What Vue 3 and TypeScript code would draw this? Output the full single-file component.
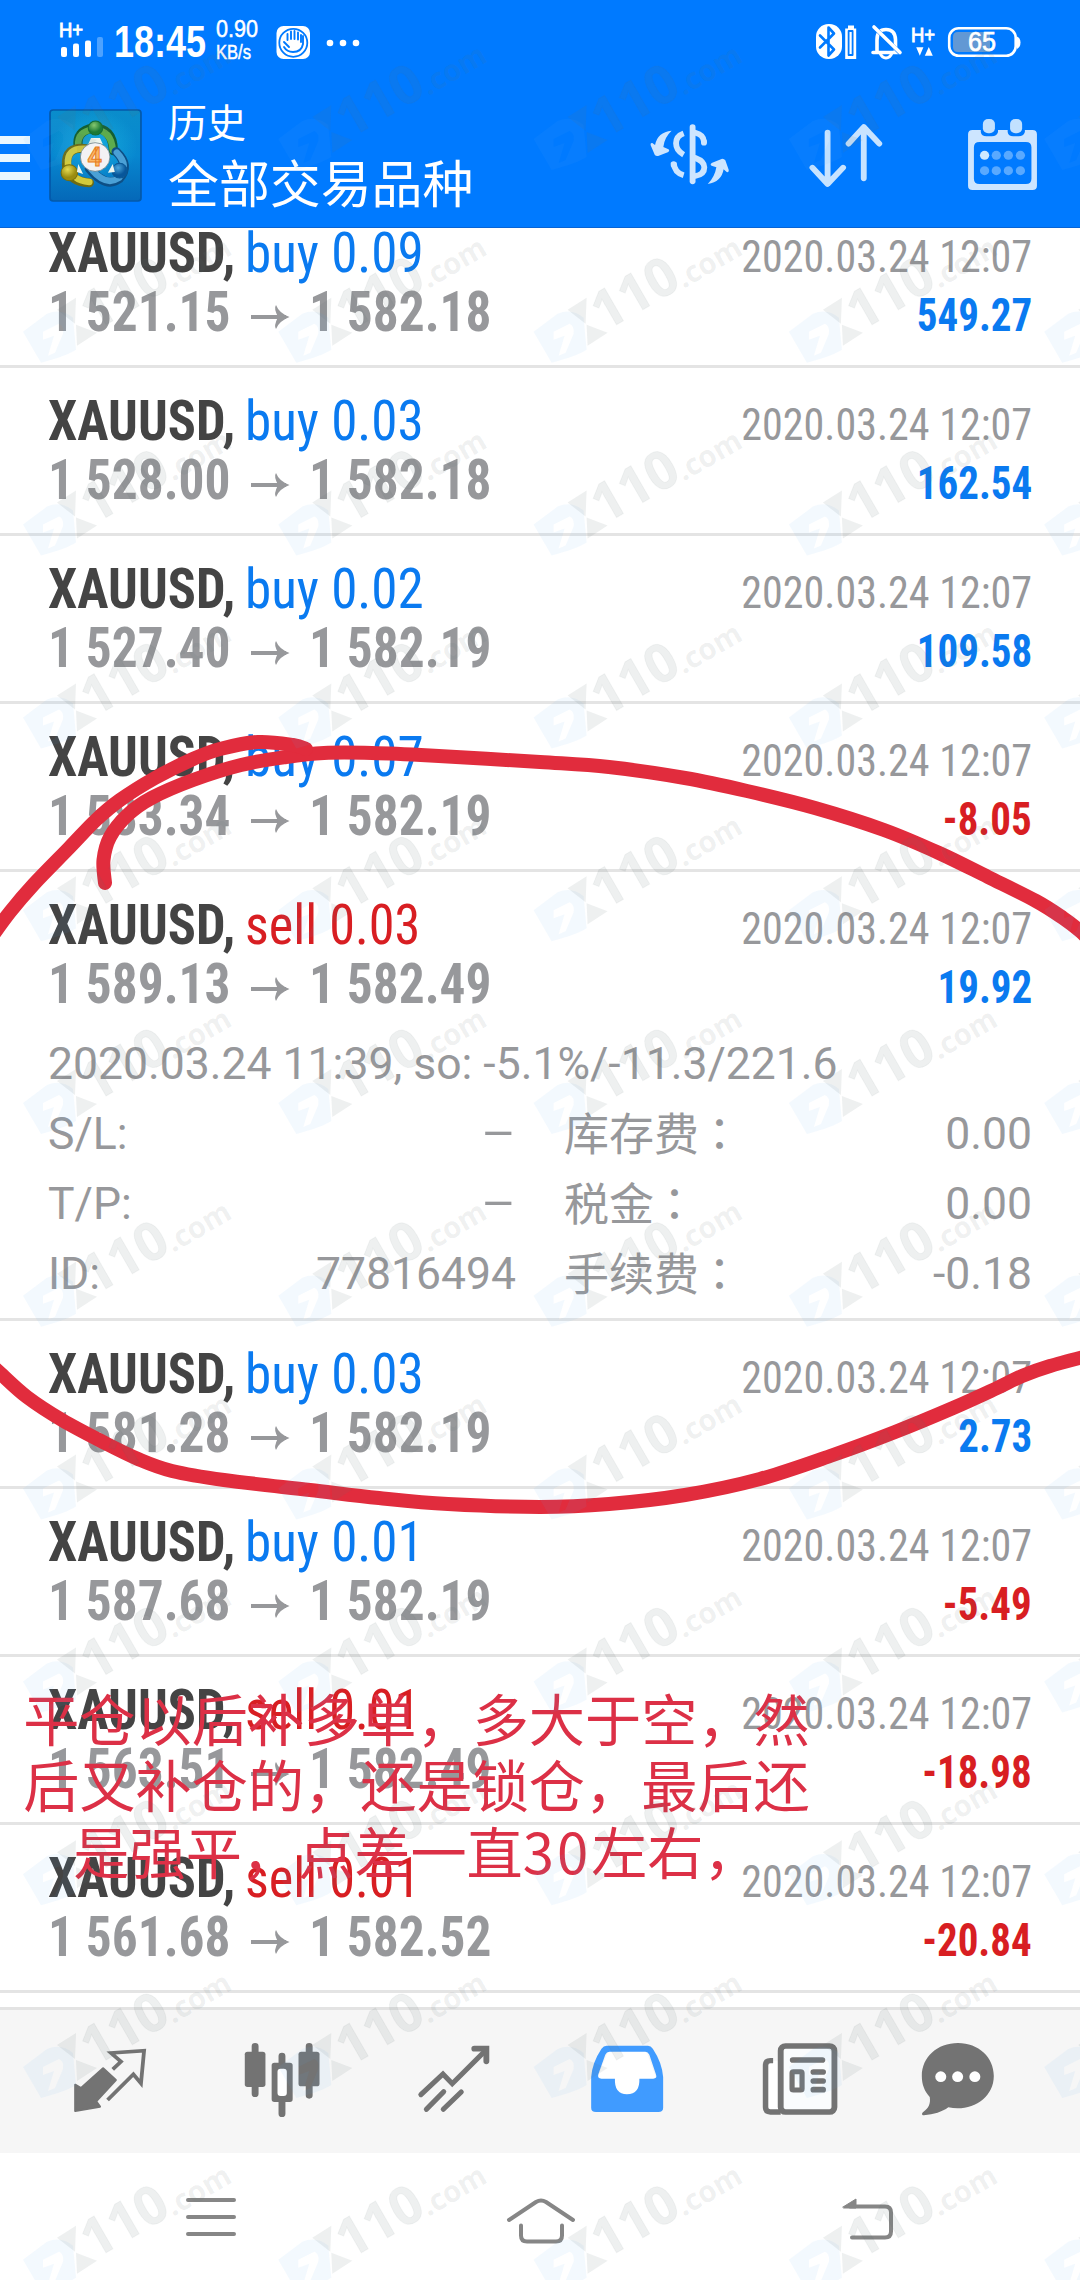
<script setup lang="ts">
interface Deal {
  side: 'buy' | 'sell'
  lots: string
  open: string
  close: string
  profit: string
  expanded?: boolean
}

type Point = [number, number]

const deals: Deal[] = [
  { side: 'buy', lots: '0.09', open: '1 521.15', close: '1 582.18', profit: '549.27' },
  { side: 'buy', lots: '0.03', open: '1 528.00', close: '1 582.18', profit: '162.54' },
  { side: 'buy', lots: '0.02', open: '1 527.40', close: '1 582.19', profit: '109.58' },
  { side: 'buy', lots: '0.07', open: '1 583.34', close: '1 582.19', profit: '-8.05' },
  { side: 'sell', lots: '0.03', open: '1 589.13', close: '1 582.49', profit: '19.92', expanded: true },
  { side: 'buy', lots: '0.03', open: '1 581.28', close: '1 582.19', profit: '2.73' },
  { side: 'buy', lots: '0.01', open: '1 587.68', close: '1 582.19', profit: '-5.49' },
  { side: 'sell', lots: '0.01', open: '1 563.51', close: '1 582.49', profit: '-18.98' },
  { side: 'sell', lots: '0.01', open: '1 561.68', close: '1 582.52', profit: '-20.84' },
]

const details = [
  { key: 'S/L', value: '–', label: '库存费', amount: '0.00' },
  { key: 'T/P', value: '–', label: '税金', amount: '0.00' },
  { key: 'ID', value: '77816494', label: '手续费', amount: '-0.18' },
]

const noteLines = ['平仓以后补多单，多大于空，然', '后又补仓的，还是锁仓，最后还']

// Smooth curve through all the points of a hand-drawn stroke
function smooth(p: Point[]): string {
  let d = `M${p[0][0]} ${p[0][1]}`
  for (let i = 0; i < p.length - 1; i++) {
    const a = p[Math.max(i - 1, 0)]
    const b = p[i]
    const c = p[i + 1]
    const e = p[Math.min(i + 2, p.length - 1)]
    d += `C${b[0] + (c[0] - a[0]) / 6} ${b[1] + (c[1] - a[1]) / 6} ${c[0] - (e[0] - b[0]) / 6} ${c[1] - (e[1] - b[1]) / 6} ${c[0]} ${c[1]}`
  }
  return d
}

const strokes = [
  smooth([[105, 883], [103.5, 860], [110, 837], [127.5, 815], [151.5, 798], [193, 780], [241, 765], [286, 757], [324, 753], [372, 753], [430, 755.5], [540, 762], [609, 767], [685, 778], [747, 791], [815, 808], [884, 830], [939, 853], [988, 877], [1036, 901], [1063, 918], [1080, 931], [1095, 945]]),
  smooth([[306, 749], [293, 745], [258, 742], [220, 749], [193, 759], [155, 778], [120, 800], [96, 820], [69, 848], [34, 884], [10, 912], [-12, 942]]),
  smooth([[-12, 1362], [0, 1373], [27, 1397], [62, 1420], [103, 1442], [138, 1459], [172, 1471], [224, 1480], [310, 1490], [379, 1498], [448, 1504], [540, 1507], [609, 1504], [685, 1495], [760, 1479], [833, 1455], [895, 1432], [953, 1408], [995, 1389], [1022, 1376], [1050, 1366], [1095, 1354]]),
]

const marks: Point[] = []
for (let r = 0; r < 12; r++) {
  for (let c = 0; c < 5; c++) marks.push([23 + c * 255.3, 45 + r * 192.8])
}
</script>

<template>
  <div class="screen">
    <header class="top">
      <div class="status">
        <svg class="status-art" viewBox="0 0 1080 84">
          <g fill="#fff">
            <rect x="61" y="47" width="6" height="10" rx="2" />
            <rect x="73" y="43.5" width="6" height="13.500" rx="2" />
            <rect x="85" y="40.500" width="6" height="16.500" rx="2" />
            <rect x="97" y="37" width="6" height="20" rx="2" opacity=".3" />
            <rect x="276.500" y="26" width="33.500" height="33" rx="7" />
            <circle cx="330" cy="43" r="3.300" /><circle cx="343" cy="43" r="3.300" /><circle cx="356" cy="43" r="3.300" />
            <rect x="816" y="24" width="26" height="35" rx="12.500" />
            <path d="M848 25.500h6v3h2.200v30.500h-11v-30.500h2.800z" />
            <path d="M916.200 47.200h7.200l-3.600 8.600zM924.800 55.800h8l-4-8.800z" />
            <path d="M1017 36.500q3.500 1.500 3.500 6t-3.500 6.500z" />
          </g>
          <g fill="none" stroke="#007aff" stroke-linecap="round" stroke-linejoin="round">
            <circle cx="293.300" cy="42.800" r="14" stroke-width="1.800" />
            <path d="M284 42l5 5M287.500 40v-6M291 39v-7.500M294.500 39v-8M298 39.500v-7M301 42v-7M303 36v8q-1.500 8-10 8-6 0-9-5" stroke-width="1.900" />
            <path d="M820 35.500l14 14-5.500 6v-28l5.500 6-14 14" stroke-width="2.600" />
            <path d="M848.600 31v24h4v-24z" stroke-width="1.800" fill="#fff" />
          </g>
          <g fill="none" stroke="#fff" stroke-linecap="round" stroke-linejoin="round">
            <path d="M877 52v-12q0-10.500 9-10.500t9.500 10v12.500M873 52.500h26" stroke-width="3.600" />
            <path d="M880 53q2 5 6 5t6-5" stroke-width="3" />
            <path d="M876 29l25 25" stroke="#007aff" stroke-width="4" />
            <path d="M874 27l26 25.500" stroke-width="3.600" />
            <rect x="949.200" y="28.200" width="66.500" height="27.600" rx="9.500" stroke-width="2.600" />
          </g>
          <path d="M958 32h32v20h-32q-5 0-5-5v-10q0-5 5-5z" fill="#6298d4" />
          <g fill="#fff" font-family="Liberation Sans, sans-serif">
            <text x="59" y="36.700" font-size="19.500" stroke="#fff" stroke-width=".9" textLength="24" lengthAdjust="spacingAndGlyphs">H+</text>
            <text x="114" y="57.200" font-size="44" font-weight="700" textLength="92" lengthAdjust="spacingAndGlyphs">18:45</text>
            <text x="216" y="36.800" font-size="23" stroke="#fff" stroke-width=".5" textLength="42" lengthAdjust="spacingAndGlyphs">0.90</text>
            <text x="216" y="59" font-size="20" stroke="#fff" stroke-width=".5" textLength="35" lengthAdjust="spacingAndGlyphs">KB/s</text>
            <text x="911" y="42" font-size="20.500" stroke="#fff" stroke-width=".9" textLength="24" lengthAdjust="spacingAndGlyphs">H+</text>
            <text x="968" y="51" font-size="27" stroke="#fff" stroke-width=".7" textLength="28" lengthAdjust="spacingAndGlyphs">65</text>
          </g>
        </svg>
      </div>
      <div class="toolbar">
        <div class="burger"><i /><i /><i /></div>
        <svg class="logo" viewBox="143 327 270 279" preserveAspectRatio="none">
          <defs>
            <linearGradient id="bg" x1="0" y1="0" x2="0" y2="1"><stop offset="0" stop-color="#0a8dcb" /><stop offset=".5" stop-color="#0787d0" /><stop offset="1" stop-color="#0568b8" /></linearGradient>
            <radialGradient id="glow"><stop offset="0" stop-color="#19b4e0" /><stop offset="1" stop-color="#19b4e0" stop-opacity="0" /></radialGradient>
            <radialGradient id="gr" cx=".4" cy=".3"><stop offset="0" stop-color="#86c870" /><stop offset="1" stop-color="#1c7a35" /></radialGradient>
            <radialGradient id="ye" cx=".4" cy=".3"><stop offset="0" stop-color="#e6dc51" /><stop offset="1" stop-color="#9a8c10" /></radialGradient>
            <radialGradient id="bl" cx=".4" cy=".3"><stop offset="0" stop-color="#4ba6dc" /><stop offset="1" stop-color="#07569a" /></radialGradient>
          </defs>
          <rect x="146" y="330" width="264" height="273" rx="9" fill="url(#bg)" stroke="#0459aa" stroke-width="5" />
          <ellipse cx="275" cy="440" rx="125" ry="110" fill="url(#glow)" opacity=".8" />
          <g fill="none" stroke-linecap="round">
            <path d="M228 442q-8-50 44-58 56 0 58 68" stroke="#145f31" stroke-width="27" />
            <path d="M228 438q-4-44 44-50 52 2 56 62" stroke="#5dab4d" stroke-width="19" />
            <path d="M250 446q-60-8-56 52 10 48 66 50" stroke="#6e6b12" stroke-width="27" />
            <path d="M248 446q-54-4-50 48 10 48 62 52" stroke="#d3ca3c" stroke-width="19" />
            <path d="M338 455q42 42 8 82-38 28-86-32" stroke="#0d4f86" stroke-width="27" />
            <path d="M340 458q36 38 6 76-38 26-80-26" stroke="#4aa0d6" stroke-width="19" />
          </g>
          <circle cx="278" cy="384" r="21" fill="url(#gr)" stroke="#176c34" stroke-width="3" />
          <circle cx="202" cy="518" r="24" fill="url(#ye)" stroke="#776e0c" stroke-width="3" />
          <circle cx="348" cy="512" r="22" fill="url(#bl)" stroke="#0a5795" stroke-width="3" />
          <path d="M265 414h26l8 18h-42zM228 492l14 30-18-6zM328 492l-14 26 20-2z" fill="#edf5ef" />
          <circle cx="277" cy="471" r="43" fill="#f3f2f4" stroke="#5b7078" stroke-width="2" />
          <text x="276" y="497" text-anchor="middle" font-family="Roboto, sans-serif" font-weight="700" font-size="78" textLength="42" lengthAdjust="spacingAndGlyphs" fill="#fbb868" stroke="#e87d22" stroke-width="3">4</text>
        </svg>
        <div class="titles">
          <div class="small">历史</div>
          <div class="big">全部交易品种</div>
        </div>
        <svg class="tool dollar" viewBox="300 357 270 216" preserveAspectRatio="none">
          <g fill="none" stroke="#cde5ff" stroke-width="17">
            <path d="M418 400q-22 8-22 30 0 22 22 34M389 488q2 30 29 38" />
            <path d="M389 495v-3M477 428v-3" stroke-linecap="round" />
            <path d="M452 398q24 6 25 27M452 474q26 10 26 28 0 22-26 26" stroke-linecap="round" />
            <path d="M444 381v163" stroke-linecap="round" />
          </g>
          <g fill="#cde5ff">
            <path d="M383 392Q342 396 335 435L327 429Q321 428 322 435L334 464Q337 469 344 468L372 457Q379 452 374 448L359 441Q362 412 383 392Z" />
            <path d="M488 552Q528 546 534 508L543 516Q550 518 549 510L539 481Q536 476 530 476L501 488Q493 493 499 497L513 502Q508 532 488 552Z" />
          </g>
        </svg>
        <svg class="tool sort" viewBox="753 357 270 216" preserveAspectRatio="none" fill="none" stroke="#c7e3ff" stroke-width="17" stroke-linecap="round" stroke-linejoin="round">
          <path d="M836 398v152M792 503l44 49 45-49M941 535V382M897 431l44-50 45 50" />
        </svg>
        <svg class="tool calendar" viewBox="1208 357 270 216" preserveAspectRatio="none">
          <path fill-rule="evenodd" d="M1256 390h24v6q2 13 16 13h16q14 0 18-13v-6h28v6q2 13 16 13h16q14 0 18-13v-6h22q13 0 13 13v154q0 13-13 13h-174q-13 0-13-13v-154q0-13 13-13zM1276 426q-16 0-16 16v94q0 16 16 16h135q16 0 16-16v-94q0-16-16-16z" fill="#cde5ff" />
          <rect x="1286" y="357" width="35" height="43" rx="15" fill="#c2e1ff" /><rect x="1365" y="357" width="35" height="43" rx="15" fill="#c2e1ff" />
          <g fill="#59a9ff"><circle cx="1291" cy="466" r="13.500" fill="#cde9ff" /><circle cx="1325" cy="466" r="13.500" /><circle cx="1360" cy="466" r="13.500" /><circle cx="1395" cy="466" r="13.500" /><circle cx="1291" cy="512" r="13.500" /><circle cx="1325" cy="512" r="13.500" /><circle cx="1360" cy="512" r="13.500" /><circle cx="1395" cy="512" r="13.500" /></g>
        </svg>
      </div>
    </header>

    <main class="list">
      <section v-for="(d, i) in deals" :key="i" class="deal" :class="{ first: i === 0 }">
        <div class="line">
          <div class="name"><b class="cond">XAUUSD,</b><span class="cond" :class="d.side">{{ d.side }} {{ d.lots }}</span></div>
          <div class="cond date">2020.03.24 12:07</div>
        </div>
        <div class="line second">
          <div class="prices">
            <span class="cond price">{{ d.open }}</span>
            <svg class="arrow" viewBox="0 0 39 26"><path d="M2 13h31" stroke="#97989b" stroke-width="4" stroke-linecap="square" /><path d="M25 1Q28 9 38.500 13 28 17 25 25 22.500 22 27 13 22.500 4 25 1z" fill="#97989b" /></svg>
            <span class="cond price">{{ d.close }}</span>
          </div>
          <div class="cond profit" :class="d.profit.startsWith('-') ? 'sell' : 'buy'">{{ d.profit }}</div>
        </div>
        <div v-if="d.expanded" class="details">
          <div class="comment">2020.03.24 11:39, so: -5.1%/-11.3/221.6</div>
          <div v-for="x in details" :key="x.key" class="detail">
            <span class="key">{{ x.key }}:</span><span class="value" :class="{ dash: x.value === '–' }">{{ x.value }}</span>
            <span class="label">{{ x.label }}<em>：</em></span><span class="amount">{{ x.amount }}</span>
          </div>
        </div>
      </section>
    </main>

    <nav class="tabs">
      <div class="tab t1"><svg viewBox="203.900 150 232.300 240" preserveAspectRatio="none">
        <path d="M219 284L236 294L300 235L337 270L280 334L291 350L219 363Z" fill="#737373" stroke="#737373" stroke-width="6" stroke-linejoin="round" />
        <path d="M328 238L352 215L323 189L419 182L410 280L388 253L313 330" fill="none" stroke="#737373" stroke-width="11" />
      </svg></div>
      <div class="tab t2"><svg viewBox="700.900 150 232.300 240" preserveAspectRatio="none">
        <g stroke="#737373" stroke-width="20" stroke-linecap="round"><path d="M739 169v142M896 169v147M817 198v22M817 330v41" /></g>
        <rect x="709" y="185" width="60" height="106" rx="8" fill="#737373" /><rect x="865" y="185" width="61" height="104" rx="8" fill="#737373" />
        <rect x="800" y="230" width="34" height="94" fill="#fff" />
        <path fill-rule="evenodd" d="M795 218h45q8 0 8 8v102q0 8-8 8h-45q-8 0-8-8v-102q0-8 8-8zM813 236q-9 0-9 9v64q0 9 9 9h9q9 0 9-9v-64q0-9-9-9z" fill="#737373" />
      </svg></div>
      <div class="tab t3"><svg viewBox="1200.900 150 232.300 240" preserveAspectRatio="none" fill="none" stroke="#737373" stroke-width="15" stroke-linecap="round">
        <path d="M1221 314L1285 252L1312 281L1410 180" /><path d="M1376 176H1411V214" stroke-width="17" /><path d="M1237 358L1287 305M1286 358L1338 306" />
      </svg></div>
      <div class="tab t4"><svg viewBox="134.900 150 232.300 240" preserveAspectRatio="none">
        <path d="M198 180h108l32 90h-50l-8 44h-60l-8-44h-50z" fill="#fff" />
        <path fill-rule="evenodd" fill="#409bff" d="M192 167h120q8 0 14 9 27 42 30 85v92q0 13-14 13h-181q-14 0-14-13v-92q3-43 30-85 6-9 15-9zM200 185q-8 0-12 9l-20 58q-4 14 9 14h39q-2 46 35 47 38-1 36-47h40q13 0 8-13l-19-59q-4-9-12-9z" />
      </svg></div>
      <div class="tab t5"><svg viewBox="638.900 150 232.300 240" preserveAspectRatio="none" fill="none" stroke="#737373" stroke-width="17">
        <rect x="655" y="212" width="44" height="154" fill="#fff" stroke="none" />
        <rect x="699" y="168" width="156" height="198" rx="14" fill="#fafcfd" /><path d="M677 212h-8q-14 0-14 14v126q0 14 14 14h30" stroke-width="16" /><path d="M734 210h86M794 246h28M794 273h28M794 299h28" stroke-linecap="round" />
        <rect x="732" y="245" width="29" height="55" rx="4" stroke-width="15" />
      </svg></div>
      <div class="tab t6"><svg viewBox="1097.900 150 232.300 240" preserveAspectRatio="none">
        <path fill="#737373" d="M1214 159c60 0 104 43 104 99 0 67-66 109-132 94-18 14-42 21-71 24-7-1-7-6-1-11 15-11 21-24 18-44-15-17-23-37-23-63 0-57 45-99 105-99z" /><g fill="#fff"><circle cx="1164" cy="260" r="16" /><circle cx="1213" cy="260" r="16" /><circle cx="1263" cy="260" r="16" /></g>
      </svg></div>
    </nav>

    <footer class="system">
      <svg width="50" height="40" viewBox="0 0 50 40"><path d="M2 3h46M2 20h46M2 37h46" /></svg>
      <svg class="home" width="72" height="48" viewBox="0 0 72 48"><path d="M4 23L31 5q5-3 10 0L68 23M16 28.500v10q0 6 6 6h29q6 0 6-6v-10" /></svg>
      <svg width="52" height="44" viewBox="0 0 52 44"><path d="M8 9.500h35q6 0 6 6v19q0 6-6 6H10" /><path d="M1 10L14 2v9H2z" fill="#868686" stroke-width="1" /></svg>
    </footer>

    <div class="note">
      <div v-for="n in noteLines" :key="n">{{ n }}</div>
      <div>是强平，点差一直<i>30</i>左右，</div>
    </div>

    <svg class="overlay" viewBox="0 0 1080 2280">
      <path v-for="s in strokes" :key="s" :d="s" fill="none" stroke="#e12c3d" stroke-width="14" stroke-linecap="round" />
      <g v-for="(m, i) in marks" :key="i" :transform="`translate(${m[0]} ${m[1]})`" font-family="Open Sans, sans-serif">
        <path fill-rule="evenodd" d="M0 94L24 76Q38 70 50 80L53 112Q44 118 18 125zM20 94L36 86Q41 88 40 96L32 115 25 118 31 98 20 102z" fill="#5ab4eb" fill-opacity=".075" />
        <g fill="#5f7373" fill-opacity=".105">
          <path d="M34 72L53 60 52 86zM53 87L74 95 54 108z" />
          <template v-if="m[0] < 1000">
            <text transform="translate(71 94) rotate(-30)" font-size="53" font-weight="700" stroke="#5f7373" stroke-opacity=".06" stroke-width="1">110</text>
            <text transform="translate(150 51) rotate(-30)" font-size="29.500" font-weight="700" textLength="70" lengthAdjust="spacingAndGlyphs">.com</text>
          </template>
        </g>
      </g>
    </svg>
  </div>
</template>

<style>
body { margin: 0; }
</style>

<style scoped>
.screen { position: relative; display: flex; flex-direction: column; width: 1080px; height: 2280px; overflow: hidden; background: #fff; font-family: Roboto, "Noto Sans CJK SC", sans-serif; }
.top { height: 227px; flex: none; background: #007aff; border-bottom: 1px solid #0864d5; }
.status { height: 84px; }
.status-art { display: block; width: 1080px; height: 84px; }
.toolbar { display: flex; height: 143px; align-items: flex-start; color: #fff; }
.burger { display: flex; flex-direction: column; gap: 10px; width: 30px; padding-top: 52px; }
.burger i { height: 8px; background: #e9f7ff; }
.logo { width: 93px; height: 93px; margin: 25px 0 0 19px; }
.titles { width: 426px; margin: 9px 0 0 26px; font-family: "Noto Sans CJK SC", sans-serif; }
.small { font-size: 39px; line-height: 54px; }
.big { margin-top: 2px; font-size: 50.900px; line-height: 64px; white-space: nowrap; }
.tool { width: 93px; height: 72px; margin-top: 35px; flex: none; }
.dollar { margin-left: 49px; }
.sort { margin-left: 63px; }
.calendar { margin-left: 64px; }
.list { height: 1779px; flex: none; overflow: hidden; }
.deal { padding: 24px 48px 23px; border-bottom: 3px solid #e4e4e4; }
.deal.first { padding-top: 0; margin-top: -4px; }
.line { display: flex; justify-content: space-between; align-items: baseline; height: 59px; line-height: 59px; white-space: nowrap; }
.cond { display: inline-block; font-family: "Roboto Condensed", Roboto, sans-serif; font-stretch: 75%; transform: scaleX(.934); transform-origin: 0 50%; }
.name { display: flex; font-size: 56px; color: #444; }
.name b { width: 197px; font-weight: 700; }
.name .buy { color: #0a7af0; transform: scaleX(.948); }
.name .sell { color: #d81e22; transform: scaleX(.932); }
.date { font-size: 45px; color: #97989b; transform: scaleX(.935); transform-origin: 100% 50%; }
.prices { display: flex; align-items: baseline; }
.price { width: 181px; font-size: 55px; font-weight: 700; color: #97989b; }
.arrow { width: 39px; height: 26px; margin: 0 19px 0 22px; transform: translateY(-1px); }
.profit { font-size: 45.500px; font-weight: 700; transform: scaleX(.9); transform-origin: 100% 50%; }
.profit.buy { color: #0a7af0; }
.profit.sell { color: #d81e22; }
.details { padding-top: 15px; margin-bottom: -14px; color: #97989b; font-size: 44.500px; line-height: 70px; }
.comment, .detail { height: 70px; white-space: nowrap; }
.detail { display: flex; }
.key { width: 100px; }
.value { width: 368px; text-align: right; }
.dash { transform: scaleX(1.2); transform-origin: 100% 50%; }
.label { margin: -2px 0 0 48px; font-size: 45px; font-family: "Noto Sans CJK SC", sans-serif; }
.label em { font-style: normal; font-family: "Noto Sans CJK TC", sans-serif; margin-left: -2px; }
.amount { margin-left: auto; }
.tabs { display: flex; height: 143px; flex: none; border-top: 3px solid #e3e3e3; background: #f6f6f6; padding-left: 24px; }
.tab { display: flex; justify-content: center; padding-top: 30px; }
.tab svg { width: 80px; height: 80px; }
.t1 { width: 172px; } .t2 { width: 171px; } .t3, .t4 { width: 173px; } .t5 { width: 174px; } .t6 { width: 142px; }
.system { display: flex; flex: 1; padding: 44px 186px 0; justify-content: space-between; align-items: flex-start; }
.system svg { fill: none; stroke: #868686; stroke-width: 4; stroke-linecap: round; stroke-linejoin: round; }
.system .home { margin-left: 4px; }
.note { position: absolute; left: 23px; top: 1684px; width: 787px; text-align: center; color: #dc3046; font: 400 56.200px/66.400px "Noto Sans CJK SC", sans-serif; white-space: nowrap; }
.note i { font-style: normal; letter-spacing: 3px; }
.overlay { position: absolute; inset: 0; width: 1080px; height: 2280px; }
</style>
